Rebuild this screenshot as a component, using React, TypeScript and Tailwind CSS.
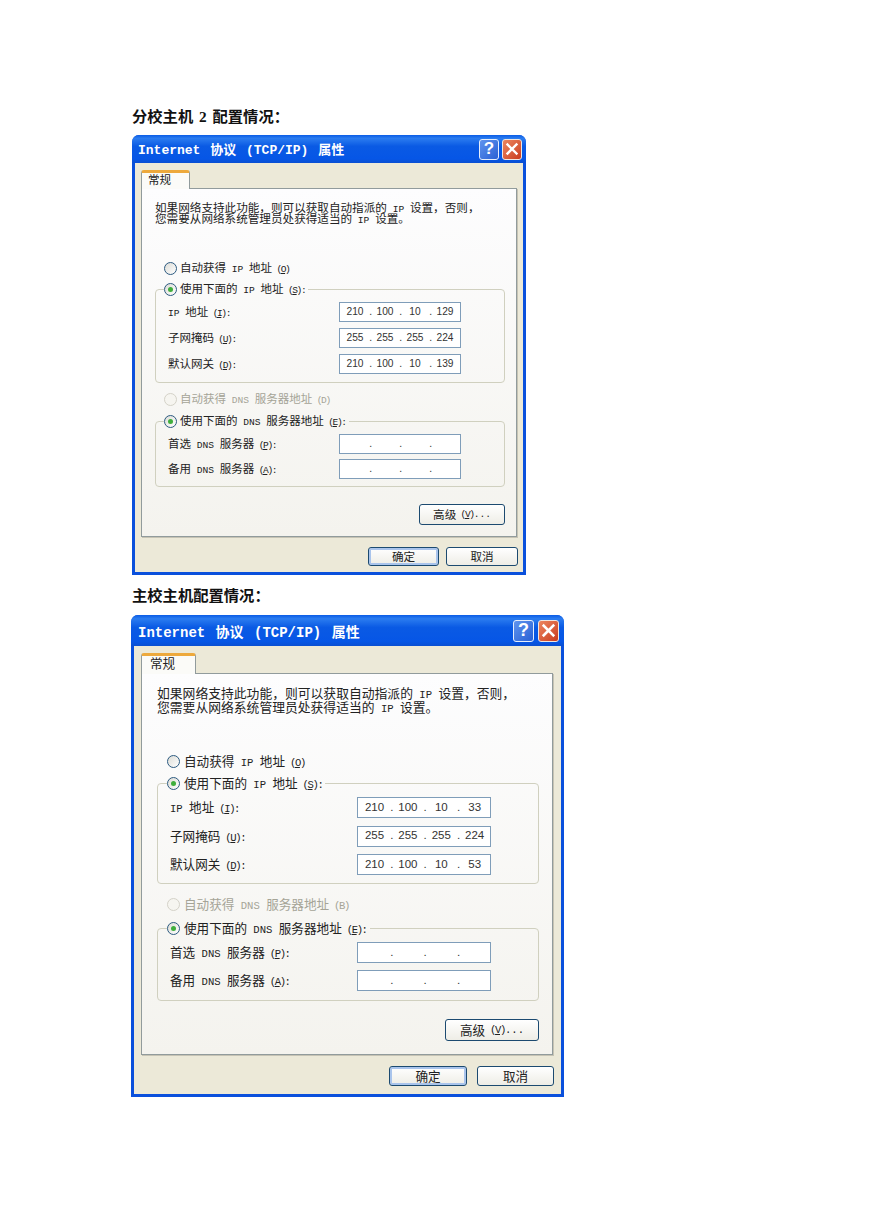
import React from "react";

type V = {
  root: string; bar: string; title: string; titleBtns: string; tbtn: string; tglyph: string; xicon: string;
  body: string; tab: string; panel: string; text: string; lat: string; desc: string;
  autoIp: string; fs1: string; legend: string; fsBody1: string; field: string; label: string;
  input: string; cell: string; num: string; dot: string; digits: string; autoDns: string; fs2: string; fsBody2: string;
  adv: string; advBtn: string; foot: string; ok: string; cancel: string;
};

const cjk = "font-['Noto_Sans_CJK_SC','Liberation_Sans',sans-serif]";

const small: V = {
  root: "w-[394px] h-[440px]",
  bar: "h-[28px] pl-[6px] pr-[3px]",
  title: "text-[13px] pt-[4px] [word-spacing:2px]",
  titleBtns: "gap-[3px] mr-[1px]",
  tbtn: "w-[20px] h-[21px]",
  tglyph: "text-[17px]",
  xicon: "w-[14px] h-[14px]",
  body: "pt-[7px] pl-[6px] pr-[6px]",
  tab: "w-[49px] h-[19px] pl-[6px] pb-[2px] text-[11.6px]",
  panel: "h-[349px] pt-[13px] pl-[13px] pr-[11px]",
  text: "text-[11.5px]",
  lat: "text-[9.6px]",
  desc: "text-[11.6px] leading-[11px]",
  autoIp: "mt-[37px] ml-[9px] gap-[3px]",
  fs1: "mt-[7px]",
  legend: "ml-[8px] pr-[3px] gap-[3px]",
  fsBody1: "pt-[6px] pb-[8px] pl-[12px] pr-[43px] gap-[6px]",
  field: "h-[20px]",
  label: "text-[11.5px]",
  input: "w-[122px] h-[20px] pl-[2px]",
  cell: "w-[30px]",
  num: "w-[26px]",
  dot: "w-[4px]",
  digits: "text-[10.2px]",
  autoDns: "mt-[9px] ml-[9px] gap-[3px]",
  fs2: "mt-[8px]",
  fsBody2: "pt-[6px] pb-[7px] pl-[12px] pr-[43px] gap-[5px]",
  adv: "mt-[17px]",
  advBtn: "w-[86px] h-[21px] text-[11.6px]",
  foot: "mt-[10px] -mr-[1px] gap-[7px]",
  ok: "w-[71px] h-[19px] text-[11.6px]",
  cancel: "w-[72px] h-[19px] text-[11.6px]",
};

const large: V = {
  root: "w-[433px] h-[482px] -ml-[1px]",
  bar: "h-[31px] pl-[7px] pr-[4px]",
  title: "text-[14px] pt-[6px] [word-spacing:2px]",
  titleBtns: "gap-[4px] mr-[1px]",
  tbtn: "w-[21px] h-[22px]",
  tglyph: "text-[18px]",
  xicon: "w-[15px] h-[15px]",
  body: "pt-[7px] pl-[7px] pr-[8px]",
  tab: "w-[55px] h-[21px] pl-[8px] pb-[3px] text-[12.6px]",
  panel: "h-[382px] pt-[12px] pl-[15px] pr-[13px]",
  text: "text-[12.6px]",
  lat: "text-[10.6px]",
  desc: "text-[12.8px] leading-[14px]",
  autoIp: "mt-[40px] ml-[10px] gap-[4px]",
  fs1: "mt-[8px]",
  legend: "ml-[9px] pr-[3px] gap-[4px]",
  fsBody1: "pt-[7px] pb-[8px] pl-[12px] pr-[47px] gap-[7.5px]",
  field: "h-[21px]",
  label: "text-[12.6px]",
  input: "w-[134px] h-[21px] pl-[2px]",
  cell: "w-[33.4px]",
  num: "w-[29px]",
  dot: "w-[4.4px]",
  digits: "text-[11.5px]",
  autoDns: "mt-[13px] ml-[10px] gap-[4px]",
  fs2: "mt-[10px]",
  fsBody2: "pt-[7px] pb-[9px] pl-[12px] pr-[47px] gap-[7px]",
  adv: "mt-[18px]",
  advBtn: "w-[94px] h-[22px] text-[12.6px]",
  foot: "mt-[11px] -mr-[1px] gap-[10px]",
  ok: "w-[78px] h-[20px] text-[12.6px]",
  cancel: "w-[77px] h-[20px] text-[12.6px]",
};

const LatCtx = React.createContext("");

function L({ children }: { children: React.ReactNode }) {
  const cls = React.useContext(LatCtx);
  return <span className={`font-['Liberation_Mono',monospace] whitespace-pre leading-[0] ${cls}`}>{children}</span>;
}

// Access-key suffix such as " (O)": set tighter than the surrounding half-width text.
function K({ children }: { children: React.ReactNode }) {
  const cls = React.useContext(LatCtx);
  return <span className={`font-['Liberation_Mono',monospace] whitespace-pre leading-[0] tracking-[-1.4px] ${cls}`}>{children}</span>;
}

function Radio({ checked, disabled }: { checked?: boolean; disabled?: boolean }) {
  return (
    <span
      className={
        disabled
          ? "flex h-[13px] w-[13px] shrink-0 items-center justify-center rounded-full border border-[#d4d2c8] bg-[#f6f5f0]"
          : "flex h-[13px] w-[13px] shrink-0 items-center justify-center rounded-full border border-[#2c5a80] bg-gradient-to-br from-[#dcdcd6] to-white"
      }
    >
      {checked && <span className="h-[5px] w-[5px] rounded-full bg-[#3fae3c]" />}
    </span>
  );
}

function IpInput({ v, value }: { v: V; value?: string[] }) {
  const parts = value ?? ["", "", "", ""];
  return (
    <div className={`flex items-center border border-[#7f9db9] bg-white text-[#333] font-['Liberation_Sans',sans-serif] ${v.input} ${v.digits}`}>
      {parts.map((p, i) => (
        <div key={i} className={`flex items-center ${v.cell}`}>
          <span className={`text-center ${v.num}`}>{p}</span>
          {i < 3 && <span className={`text-right ${v.dot}`}>.</span>}
        </div>
      ))}
    </div>
  );
}

function Field({ v, label, value }: { v: V; label: React.ReactNode; value?: string[] }) {
  return (
    <div className={`flex items-center justify-between ${v.field}`}>
      <span className={`text-[#222] ${v.label}`}>{label}</span>
      <IpInput v={v} value={value} />
    </div>
  );
}

function Btn({ cls, children, primary }: { cls: string; children: React.ReactNode; primary?: boolean }) {
  return (
    <button
      className={
        (primary ? "shadow-[inset_0_0_0_2px_#a9c4ec] " : "") +
        `flex items-center justify-center rounded-[3px] border border-[#1c4a70] bg-gradient-to-b from-white to-[#eeede6] text-[#222] ${cls}`
      }
    >
      {children}
    </button>
  );
}

function Dialog({ v, ip, mask, gw, dnsKey }: { v: V; ip: string[]; mask: string[]; gw: string[]; dnsKey: string }) {
  return (
    <LatCtx.Provider value={v.lat}>
      <div className={`flex flex-col rounded-t-[7px] bg-[#0a50dc] ${cjk} ${v.root}`}>
        <div className={`flex shrink-0 items-center justify-between rounded-t-[7px] bg-[linear-gradient(180deg,#0a5ce6_0%,#2b7cf0_12%,#0a5ae4_40%,#0656e6_85%,#0a4fd2_100%)] ${v.bar}`}>
          <span className={`whitespace-pre font-bold text-white font-['Liberation_Mono','Noto_Sans_CJK_SC',monospace] ${v.title}`}>
            Internet 协议 (TCP/IP) 属性
          </span>
          <div className={`flex items-center ${v.titleBtns}`}>
            <span className={`flex items-center justify-center rounded-[3px] border border-[#e6eefc] bg-gradient-to-br from-[#5f94ee] to-[#2a60d4] font-bold text-white font-['Liberation_Sans',sans-serif] ${v.tbtn} ${v.tglyph}`}>
              ?
            </span>
            <span className={`flex items-center justify-center rounded-[3px] border border-[#f0e6e0] bg-gradient-to-br from-[#ec8660] to-[#c93a1c] ${v.tbtn}`}>
              <svg viewBox="0 0 14 14" className={v.xicon} fill="none" stroke="white" strokeWidth="2.4" strokeLinecap="square">
                <path d="M2.5 2.5 L11.5 11.5 M11.5 2.5 L2.5 11.5" />
              </svg>
            </span>
          </div>
        </div>
        <div className={`mx-[3px] mb-[3px] flex flex-1 flex-col bg-[#ece9d8] ${v.body}`}>
          <div className={`relative z-10 -mb-[1px] flex items-center rounded-t-[3px] border border-b-0 border-[#919b9c] border-t-[3px] border-t-[#eda93c] bg-[#fbfbf8] text-[#222] ${v.tab}`}>
            常规
          </div>
          <div className={`border border-[#919b9c] bg-gradient-to-b from-[#fdfdfe] to-[#f4f3ee] shadow-[1px_1px_0_#c6c3b4] ${v.panel}`}>
            <p className={`text-[#222] ${v.desc}`}>
              如果网络支持此功能，则可以获取自动指派的<L> IP </L>设置，否则，
              <br />
              您需要从网络系统管理员处获得适当的<L> IP </L>设置。
            </p>

            <div className={`flex h-[14px] items-center text-[#222] ${v.autoIp} ${v.text}`}>
              <Radio />
              <span>自动获得<L> IP </L>地址<K> (<u>O</u>)</K></span>
            </div>

            <fieldset className={`flex flex-col rounded-[4px] border border-[#d0d0bf] ${v.fs1}`}>
              <legend className={`flex h-[14px] items-center text-[#222] ${v.legend} ${v.text}`}>
                <Radio checked />
                <span>使用下面的<L> IP </L>地址<K> (<u>S</u>):</K></span>
              </legend>
              <div className={`flex flex-col ${v.fsBody1}`}>
                <Field v={v} value={ip} label={<><L>IP </L>地址<K> (<u>I</u>):</K></>} />
                <Field v={v} value={mask} label={<>子网掩码<K> (<u>U</u>):</K></>} />
                <Field v={v} value={gw} label={<>默认网关<K> (<u>D</u>):</K></>} />
              </div>
            </fieldset>

            <div className={`flex h-[14px] items-center text-[#a5a497] ${v.autoDns} ${v.text}`}>
              <Radio disabled />
              <span>自动获得<L> DNS </L>服务器地址<K> ({dnsKey})</K></span>
            </div>

            <fieldset className={`flex flex-col rounded-[4px] border border-[#d0d0bf] ${v.fs2}`}>
              <legend className={`flex h-[14px] items-center text-[#222] ${v.legend} ${v.text}`}>
                <Radio checked />
                <span>使用下面的<L> DNS </L>服务器地址<K> (<u>E</u>):</K></span>
              </legend>
              <div className={`flex flex-col ${v.fsBody2}`}>
                <Field v={v} label={<>首选<L> DNS </L>服务器<K> (<u>P</u>):</K></>} />
                <Field v={v} label={<>备用<L> DNS </L>服务器<K> (<u>A</u>):</K></>} />
              </div>
            </fieldset>

            <div className={`flex justify-end ${v.adv}`}>
              <Btn cls={v.advBtn}>高级<K> (<u>V</u>)</K><L>...</L></Btn>
            </div>
          </div>
          <div className={`flex justify-end ${v.foot}`}>
            <Btn primary cls={v.ok}>确定</Btn>
            <Btn cls={v.cancel}>取消</Btn>
          </div>
        </div>
      </div>
    </LatCtx.Provider>
  );
}

export default function App() {
  return (
    <div className={`h-[1228px] w-[869px] overflow-hidden bg-white pl-[132px] pt-[105px] ${cjk}`}>
      <h2 className="h-[20px] text-[15.3px] font-bold leading-[20px] text-[#111]">
        分校主机<span className="font-['Liberation_Serif',serif] whitespace-pre px-[2px]"> 2 </span>配置情况：
      </h2>
      <div className="mt-[10px]">
        <Dialog
          v={small}
          ip={["210", "100", "10", "129"]}
          mask={["255", "255", "255", "224"]}
          gw={["210", "100", "10", "139"]}
          dnsKey="D"
        />
      </div>
      <h2 className="mt-[9px] h-[20px] text-[15.3px] font-bold leading-[20px] text-[#111]">主校主机配置情况：</h2>
      <div className="mt-[11px]">
        <Dialog
          v={large}
          ip={["210", "100", "10", "33"]}
          mask={["255", "255", "255", "224"]}
          gw={["210", "100", "10", "53"]}
          dnsKey="B"
        />
      </div>
    </div>
  );
}
